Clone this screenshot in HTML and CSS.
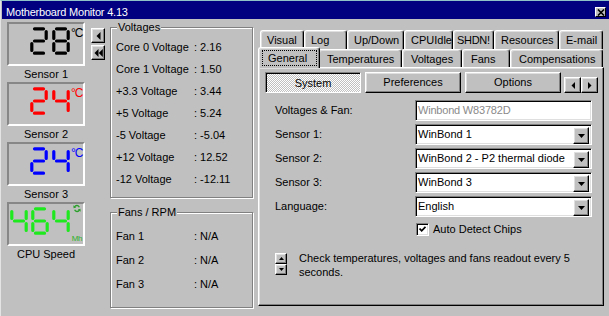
FILE: index.html
```html
<!DOCTYPE html>
<html>
<head>
<meta charset="utf-8">
<title>Motherboard Monitor 4.13</title>
<link rel="stylesheet" href="styles.css">
</head>
<body>
<svg class="defs" width="0" height="0" aria-hidden="true">
  <symbol id="d2" viewBox="0 0 18 28"><path d="M4.5 1.8H13.5M16.2 4.5V11.5M4.5 14H13.5M1.8 16.5V23.5M4.5 26.2H13.5" fill="none" stroke="currentColor" stroke-width="3.2" stroke-linecap="round"/></symbol>
  <symbol id="d4" viewBox="0 0 18 28"><path d="M1.8 4.5V11.5M16.2 4.5V11.5M4.5 14H13.5M16.2 16.5V23.5" fill="none" stroke="currentColor" stroke-width="3.2" stroke-linecap="round"/></symbol>
  <symbol id="d6" viewBox="0 0 18 28"><path d="M4.5 1.8H13.5M1.8 4.5V11.5M4.5 14H13.5M1.8 16.5V23.5M16.2 16.5V23.5M4.5 26.2H13.5" fill="none" stroke="currentColor" stroke-width="3.2" stroke-linecap="round"/></symbol>
  <symbol id="d8" viewBox="0 0 18 28"><path d="M4.5 1.8H13.5M1.8 4.5V11.5M16.2 4.5V11.5M4.5 14H13.5M1.8 16.5V23.5M16.2 16.5V23.5M4.5 26.2H13.5" fill="none" stroke="currentColor" stroke-width="3.2" stroke-linecap="round"/></symbol>
</svg>
<div class="window">
  <div class="titlebar">
    <span class="title">Motherboard Monitor 4.13</span>
    <span class="close"><svg width="8" height="7" viewBox="0 0 8 7"><path d="M1 0.5L7 6.5M7 0.5L1 6.5" stroke="#000" stroke-width="1.6"/></svg></span>
  </div>
  <div class="body">
    <div class="displays">
      <div class="disp black">
        <div class="digits"><svg class="dg" viewBox="0 0 18 28"><use href="#d2"/></svg><svg class="dg" viewBox="0 0 18 28"><use href="#d8"/></svg></div>
        <div class="unit">°C</div>
      </div>
      <div class="cap">Sensor 1</div>
      <div class="disp red">
        <div class="digits"><svg class="dg" viewBox="0 0 18 28"><use href="#d2"/></svg><svg class="dg" viewBox="0 0 18 28"><use href="#d4"/></svg></div>
        <div class="unit">°C</div>
      </div>
      <div class="cap">Sensor 2</div>
      <div class="disp blue">
        <div class="digits"><svg class="dg" viewBox="0 0 18 28"><use href="#d2"/></svg><svg class="dg" viewBox="0 0 18 28"><use href="#d4"/></svg></div>
        <div class="unit">°C</div>
      </div>
      <div class="cap">Sensor 3</div>
      <div class="disp green">
        <div class="digits"><svg class="dg" viewBox="0 0 18 28"><use href="#d4"/></svg><svg class="dg" viewBox="0 0 18 28"><use href="#d6"/></svg><svg class="dg" viewBox="0 0 18 28"><use href="#d4"/></svg></div>
        <div class="unit mhz">
          <svg class="refresh" width="8" height="9" viewBox="0 0 8 9"><path d="M6.3 3.2A2.6 2.6 0 0 0 1.6 2.8M1.7 5.8A2.6 2.6 0 0 0 6.4 6.2" fill="none" stroke="#2aa02a" stroke-width="1.4"/><path d="M0.3 1.2L3.2 3.4L0.6 4.2Z M7.7 7.8L4.8 5.6L7.4 4.8Z" fill="#2aa02a"/></svg>
          <span class="mh">Mh</span>
        </div>
      </div>
      <div class="cap">CPU Speed</div>
    </div>

    <div class="nav">
      <div class="btn nbtn"><svg width="5" height="8" viewBox="0 0 5 8"><path d="M4.5 0V8L0.5 4Z" fill="#000"/></svg></div>
      <div class="btn nbtn"><svg width="9" height="8" viewBox="0 0 9 8"><path d="M4.5 0V8L0.5 4ZM8.8 0V8L4.8 4Z" fill="#000"/></svg></div>
    </div>

    <div class="groups">
      <div class="grp volt">
        <span class="grp-title">Voltages</span>
        <div class="row"><span class="lbl">Core 0 Voltage</span><span>: 2.16</span></div>
        <div class="row"><span class="lbl">Core 1 Voltage</span><span>: 1.50</span></div>
        <div class="row"><span class="lbl">+3.3 Voltage</span><span>: 3.44</span></div>
        <div class="row"><span class="lbl">+5 Voltage</span><span>: 5.24</span></div>
        <div class="row"><span class="lbl">-5 Voltage</span><span>: -5.04</span></div>
        <div class="row"><span class="lbl">+12 Voltage</span><span>: 12.52</span></div>
        <div class="row"><span class="lbl">-12 Voltage</span><span>: -12.11</span></div>
      </div>
      <div class="grp fans">
        <span class="grp-title">Fans / RPM</span>
        <div class="row"><span class="lbl">Fan 1</span><span>: N/A</span></div>
        <div class="row"><span class="lbl">Fan 2</span><span>: N/A</span></div>
        <div class="row"><span class="lbl">Fan 3</span><span>: N/A</span></div>
      </div>
    </div>

    <div class="tabctl">
      <div class="tabrow back">
        <div class="tab w44">Visual</div>
        <div class="tab w43">Log</div>
        <div class="tab w57">Up/Down</div>
        <div class="tab w49">CPUIdle</div>
        <div class="tab w41 tight">SHDN!</div>
        <div class="tab w65">Resources</div>
        <div class="tab w44">E-mail</div>
      </div>
      <div class="tabrow front">
        <div class="tab sel"><span class="focus">General</span></div>
        <div class="tab w84">Temperatures</div>
        <div class="tab w60">Voltages</div>
        <div class="tab w48">Fans</div>
        <div class="tab w93">Compensations</div>
      </div>
      <div class="panel">
        <div class="btabs">
          <div class="btab pressed">System</div>
          <div class="btab btn">Preferences</div>
          <div class="btab btn">Options</div>
          <div class="scroll">
            <div class="btn sbtn"><svg width="4" height="7" viewBox="0 0 4 7"><path d="M4 0V7L0.5 3.5Z" fill="#000"/></svg></div>
            <div class="btn sbtn"><svg width="4" height="7" viewBox="0 0 4 7"><path d="M0 0V7L3.5 3.5Z" fill="#000"/></svg></div>
          </div>
        </div>
        <div class="form">
          <div class="frow"><span class="flbl">Voltages &amp; Fan:</span><div class="field disabled">Winbond W83782D</div></div>
          <div class="frow"><span class="flbl">Sensor 1:</span><div class="field combo"><span class="ctext">WinBond 1</span><span class="btn drop"><svg width="7" height="4" viewBox="0 0 7 4"><path d="M0 0H7L3.5 4Z" fill="#000"/></svg></span></div></div>
          <div class="frow"><span class="flbl">Sensor 2:</span><div class="field combo"><span class="ctext">WinBond 2 - P2 thermal diode</span><span class="btn drop"><svg width="7" height="4" viewBox="0 0 7 4"><path d="M0 0H7L3.5 4Z" fill="#000"/></svg></span></div></div>
          <div class="frow"><span class="flbl">Sensor 3:</span><div class="field combo"><span class="ctext">WinBond 3</span><span class="btn drop"><svg width="7" height="4" viewBox="0 0 7 4"><path d="M0 0H7L3.5 4Z" fill="#000"/></svg></span></div></div>
          <div class="frow"><span class="flbl">Language:</span><div class="field combo"><span class="ctext">English</span><span class="btn drop"><svg width="7" height="4" viewBox="0 0 7 4"><path d="M0 0H7L3.5 4Z" fill="#000"/></svg></span></div></div>
        </div>
        <div class="check">
          <span class="cbox"><svg width="7" height="7" viewBox="0 0 7 7"><path d="M0.5 2.5L2.7 4.8L6.5 0.8" fill="none" stroke="#000" stroke-width="1.8"/></svg></span>
          <span>Auto Detect Chips</span>
        </div>
        <div class="interval">
          <div class="spin">
            <div class="btn spbtn"><svg width="5" height="3" viewBox="0 0 5 3"><path d="M0 3H5L2.5 0Z" fill="#000"/></svg></div>
            <div class="btn spbtn"><svg width="5" height="3" viewBox="0 0 5 3"><path d="M0 0H5L2.5 3Z" fill="#000"/></svg></div>
          </div>
          <p class="itext">Check temperatures, voltages and fans readout every 5 seconds.</p>
        </div>
      </div>
    </div>
  </div>
</div>
</body>
</html>
```

FILE: styles.css
```css
html, body {
  margin: 0;
  padding: 0;
}
body {
  width: 609px;
  height: 316px;
  overflow: hidden;
  background: #c0c0c0;
  color: #000;
  font-family: "Liberation Sans", Arial, sans-serif;
  font-size: 11px;
  line-height: 13px;
}
.defs {
  display: block;
  width: 0;
  height: 0;
  overflow: hidden;
}
.window {
  height: 316px;
  box-sizing: border-box;
  border-top: 1px solid #8ec2c8;
  border-left: 1px solid #e4e4e4;
}
.titlebar {
  height: 18px;
  margin-left: 1px;
  box-sizing: border-box;
  padding: 5px 3px 0 4px;
  background: #000080;
  color: #fff;
  display: flex;
  justify-content: space-between;
  align-items: flex-start;
}
.title {
  letter-spacing: -0.2px;
}
.close {
  width: 11px;
  height: 10px;
  margin-top: 1px;
  box-sizing: border-box;
  background: #c0c0c0;
  border: 1px solid;
  border-color: #fff #000 #000 #fff;
  display: flex;
  align-items: center;
  justify-content: center;
}
.body {
  display: flex;
  height: 297px;
}

/* raised button look */
.btn {
  box-sizing: border-box;
  background: #c0c0c0;
  border: 1px solid;
  border-color: #fff #000 #000 #fff;
  box-shadow: inset -1px -1px #808080, inset 1px 1px #dfdfdf;
  display: flex;
  align-items: center;
  justify-content: center;
}

/* LED displays */
.displays {
  margin-left: 6px;
  padding-top: 3px;
  width: 78px;
}
.disp {
  width: 78px;
  height: 44px;
  box-sizing: border-box;
  border: 2px solid;
  border-color: #878787 #fff #fff #878787;
  display: flex;
  justify-content: flex-end;
  padding: 3px 1px 0 0;
}
.digits {
  display: flex;
  gap: 4px;
}
.dg {
  width: 18px;
  height: 28px;
  display: block;
}
.unit {
  width: 11px;
  margin-left: 1px;
  font-size: 12px;
  line-height: 12px;
  letter-spacing: -1px;
}
.black { color: #000; }
.red { color: #ff0000; }
.blue { color: #0000ff; }
.green { color: #1ee81e; }
.green .digits {
  gap: 3px;
}
.unit.mhz {
  height: 39px;
  margin-top: -3px;
  display: flex;
  flex-direction: column;
  justify-content: space-between;
  align-items: flex-end;
  letter-spacing: 0;
}
.refresh {
  display: block;
  margin-right: 1px;
}
.mh {
  font-size: 8px;
  line-height: 9px;
  color: #2ab02a;
  letter-spacing: -0.4px;
}
.cap {
  width: 78px;
  height: 16px;
  line-height: 16px;
  text-align: center;
}

/* small nav buttons */
.nav {
  margin: 9px 0 0 6px;
  width: 14px;
  display: flex;
  flex-direction: column;
  gap: 2px;
}
.nbtn {
  width: 14px;
  height: 15px;
}

/* group boxes */
.groups {
  margin: 8px 0 0 5px;
  width: 143px;
}
.grp {
  box-sizing: border-box;
  width: 143px;
  border: 1px solid #808080;
  box-shadow: 1px 1px #fff, inset 1px 1px #fff;
  padding: 0 0 0 5px;
}
.grp-title {
  display: block;
  width: max-content;
  margin: -7px 0 2px 1px;
  padding: 0 1px;
  background: #c0c0c0;
}
.volt {
  padding-bottom: 7px;
}
.fans {
  margin-top: 14px;
  padding-bottom: 11px;
}
.fans .grp-title {
  margin-bottom: 5px;
}
.row {
  display: flex;
  align-items: center;
  height: 22px;
}
.fans .row {
  height: 24px;
}
.lbl {
  width: 78px;
}

/* tab control */
.tabctl {
  margin: 11px 0 0 5px;
  width: 346px;
}
.tabrow {
  display: flex;
  padding-left: 2px;
}
.tab {
  box-sizing: border-box;
  background: #c0c0c0;
  border-top: 1px solid #fff;
  border-left: 1px solid #fff;
  border-right: 1px solid #000;
  border-radius: 3px 3px 0 0;
  box-shadow: inset -1px 0 #808080, inset 1px 1px #dfdfdf;
  white-space: nowrap;
  overflow: hidden;
}
.back .tab {
  height: 19px;
  padding: 3px 0 0 6px;
}
.back .tab.tight {
  padding-left: 3px;
  letter-spacing: -0.3px;
}
.front {
  height: 20px;
  margin-top: -2px;
  align-items: flex-end;
}
.front .tab {
  height: 18px;
  padding: 3px 0 0 8px;
}
.front .tab.sel {
  position: relative;
  z-index: 1;
  width: 62px;
  height: 21px;
  margin: 0 -2px -1px -2px;
  padding: 2px 2px 2px 3px;
}
.focus {
  display: block;
  height: 16px;
  box-sizing: border-box;
  border: 1px dotted #000;
  padding: 1px 0 0 5px;
}
.w41 { width: 41px; }
.w43 { width: 43px; }
.w44 { width: 44px; }
.w48 { width: 48px; }
.w49 { width: 49px; }
.w57 { width: 57px; }
.w60 { width: 60px; }
.w65 { width: 65px; }
.w84 { width: 84px; }
.w93 { width: 93px; }

.panel {
  height: 239px;
  box-sizing: border-box;
  border: 1px solid;
  border-color: #fff #000 #000 #fff;
  box-shadow: inset -1px -1px #808080, inset 1px 1px #dfdfdf;
  padding: 4px 0 0 6px;
}
.btabs {
  display: flex;
  align-items: flex-end;
  gap: 4px;
}
.btab {
  width: 96px;
  height: 21px;
  line-height: 19px;
  text-align: center;
}
.pressed {
  box-sizing: border-box;
  border: 1px solid;
  border-color: #808080 #fff #fff #808080;
  box-shadow: inset 1px 1px #000;
  background: repeating-conic-gradient(#fff 0 25%, #c0c0c0 0 50%) 0 0 / 2px 2px;
  padding-top: 1px;
}
.scroll {
  display: flex;
  margin-left: -1px;
}
.sbtn {
  width: 17px;
  height: 16px;
}

.form {
  margin: 7px 0 0 10px;
  display: flex;
  flex-direction: column;
  gap: 3px;
}
.frow {
  display: flex;
  align-items: center;
  height: 21px;
}
.flbl {
  width: 140px;
}
.field {
  width: 177px;
  height: 21px;
  box-sizing: border-box;
  background: #fff;
  border: 1px solid;
  border-color: #808080 #fff #fff #808080;
  box-shadow: inset 1px 1px #000, inset -1px -1px #dfdfdf;
  padding: 3px 0 0 2px;
  white-space: nowrap;
}
.disabled {
  color: #8a8a8a;
  letter-spacing: -0.2px;
}
.combo {
  display: flex;
  justify-content: space-between;
  padding: 2px 2px 2px 2px;
}
.ctext {
  padding-top: 1px;
}
.drop {
  width: 16px;
  height: 17px;
}
.check {
  display: flex;
  align-items: center;
  margin: 6px 0 0 151px;
  gap: 4px;
}
.cbox {
  width: 13px;
  height: 13px;
  box-sizing: border-box;
  background: #fff;
  border: 1px solid;
  border-color: #808080 #fff #fff #808080;
  box-shadow: inset 1px 1px #000, inset -1px -1px #dfdfdf;
  display: flex;
  align-items: center;
  justify-content: center;
}
.interval {
  display: flex;
  align-items: flex-start;
  margin: 17px 0 0 10px;
}
.spin {
  display: flex;
  flex-direction: column;
  width: 12px;
}
.spbtn {
  width: 12px;
  height: 11px;
}
.itext {
  margin: -2px 0 0 12px;
  width: 290px;
  line-height: 14px;
}
```
